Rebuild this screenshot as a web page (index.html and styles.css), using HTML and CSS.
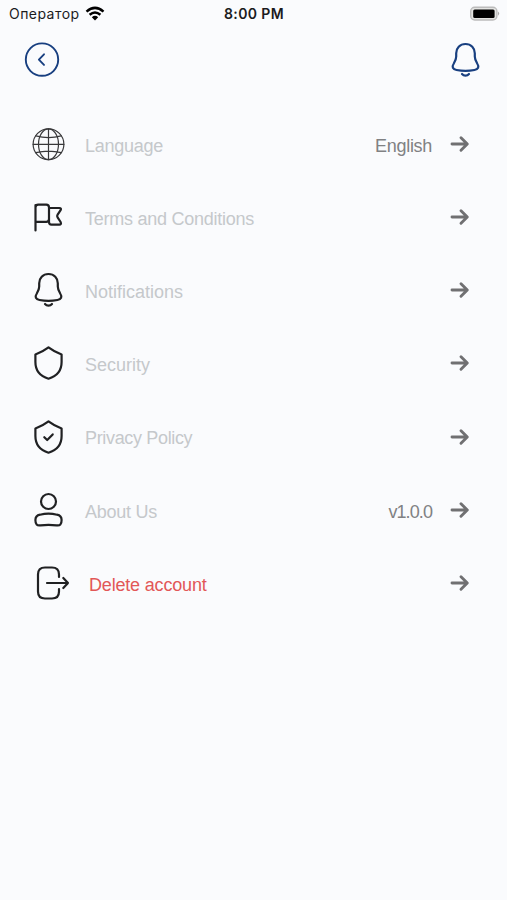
FILE: index.html
```html
<!DOCTYPE html>
<html lang="en">
<head>
<meta charset="utf-8">
<title>Settings</title>
<link rel="stylesheet" href="styles.css">
</head>
<body>
<svg class="defs" aria-hidden="true">
  <symbol id="arrow" viewBox="0 0 20 20"><path d="M2 10H17M11 3.8L17.3 10L11 16.2"/></symbol>
  <symbol id="bell" viewBox="0 0 40 40"><path d="M20.5 4C14.8 4 11.2 8 11.2 13.2V16.5C11.2 19.5 10.2 21.2 8.8 23.5C6.500 27 7.800 29.300 11.500 30C17 31 24 31 29.500 30C33.200 29.300 34.500 27 32.200 23.500C30.800 21.200 29.800 19.500 29.800 16.500V13.200C29.800 8 26.200 4 20.500 4Z"/><path d="M17 34C18.800 36.100 22.200 36.100 24 34"/></symbol>
  <symbol id="shield" viewBox="0 0 40 40"><path d="M20.500 4.300C24.500 7.400 28.500 9.400 33.600 11.500V19C33.600 27.500 28.500 33.300 20.500 35.700C12.500 33.300 7.400 27.500 7.400 19V11.500C12.500 9.400 16.500 7.400 20.500 4.300Z"/></symbol>
</svg>
<header class="status">
  <div class="carrier"><span class="operator">Оператор</span>
    <svg class="wifi" viewBox="0 0 20 16"><path d="M1.500 5.600Q10 -1.800 18.500 5.600M4.600 8.800Q10 4.200 15.400 8.800"/><path class="solid" d="M6.800 11.200Q10 8.500 13.200 11.200L10 14.500Z"/></svg>
  </div>
  <time>8:00 PM</time>
  <svg class="battery" viewBox="0 0 30 16"><rect class="case" x=".7" y="1.200" width="26.200" height="12.800" rx="4"/><rect class="charge" x="3.200" y="3.400" width="21.400" height="8.600" rx="1.500"/><path class="tip" d="M28 5.500Q30.300 7.600 28 9.700Z"/></svg>
</header>
<nav class="toolbar">
  <svg class="back" viewBox="0 0 36 36"><circle cx="18" cy="17.600" r="16.200"/><path d="M20 12.300L14.900 17.600L20 22.900"/></svg>
  <svg class="icon blue"><use href="#bell"/></svg>
</nav>
<main class="menu">
  <a class="row"><svg class="icon globe" viewBox="0 0 40 40"><circle cx="20.500" cy="20.300" r="15.400"/><path d="M20.500 5V35.600M5.100 20.300H35.900M7.800 11.900Q20.500 15.200 33.200 11.900M7.800 28.700Q20.500 25.400 33.200 28.700"/><ellipse cx="20.500" cy="20.300" rx="10" ry="15.400"/></svg><span class="label language">Language</span><span class="value english">English</span><svg class="arrow"><use href="#arrow"/></svg></a>
  <a class="row"><svg class="icon flag" viewBox="0 0 40 40"><path d="M7.500 8V33.500M7.500 24.800H18.300Q21 24.800 21 22V10.500Q21 7.700 18.300 7.700H10.300Q7.500 7.700 7.500 10.500M21 11H31.200Q33.800 11 32.600 13.200L29.600 17.700Q28.700 19 29.600 20.400L32.600 25Q33.800 27.600 31.200 27.600H23.500Q21 27.600 21 25V20"/></svg><span class="label terms">Terms and Conditions</span><svg class="arrow"><use href="#arrow"/></svg></a>
  <a class="row"><svg class="icon"><use href="#bell"/></svg><span class="label notifications">Notifications</span><svg class="arrow"><use href="#arrow"/></svg></a>
  <a class="row"><svg class="icon"><use href="#shield"/></svg><span class="label security">Security</span><svg class="arrow"><use href="#arrow"/></svg></a>
  <a class="row"><svg class="icon" viewBox="0 0 40 40"><use href="#shield" width="40" height="40"/><path d="M16.300 20.200L19.200 23L24.700 17.400"/></svg><span class="label privacy">Privacy Policy</span><svg class="arrow"><use href="#arrow"/></svg></a>
  <a class="row"><svg class="icon" viewBox="0 0 40 40"><circle cx="20.500" cy="11.500" r="7.500"/><path d="M12 24.700Q20.500 22.700 29 24.700C32.500 25.400 33.600 27 33.600 30C33.600 34.500 32 35.900 28.500 35.300Q20.500 34.400 12.500 35.300C9 35.900 7.400 34.500 7.400 30C7.400 27 8.500 25.400 12 24.700Z"/></svg><span class="label about">About Us</span><span class="value version">v1.0.0</span><svg class="arrow"><use href="#arrow"/></svg></a>
  <a class="row"><svg class="icon exit" viewBox="0 0 44 40"><path d="M31 14V11.500Q31 4.500 24 4.500H17Q10 4.500 10 11.500V28.500Q10 35.500 17 35.500H24Q31 35.500 31 28.500V26M19 20H40M35.300 15L40 20L35.300 25"/></svg><span class="label delete">Delete account</span><svg class="arrow"><use href="#arrow"/></svg></a>
</main>
</body>
</html>
```
FILE: styles.css
```css
body {
  margin: 0;
  width: 507px;
  height: 900px;
  background: #fafbfd;
  font-family: "Liberation Sans", Arial, sans-serif;
  overflow: hidden;
}
svg {
  display: block;
  flex: none;
  fill: none;
  stroke-linecap: round;
  stroke-linejoin: round;
}
.defs { display: none; }
.status {
  display: grid;
  grid-template-columns: 1fr auto 1fr;
  align-items: center;
  height: 27px;
  padding: 0 7px 0 9px;
  font: 14px/27px Inter, sans-serif;
  color: #1b1b1d;
}
.carrier { display: flex; align-items: center; gap: 5px; }
.operator { letter-spacing: .45px; }
.wifi { width: 20px; height: 16px; stroke: #000; stroke-width: 2.500; stroke-linecap: butt; }
.wifi .solid { fill: #000; stroke: none; }
time { font-weight: 600; letter-spacing: .4px; margin-right: 1px; }
.battery { width: 30px; height: 16px; justify-self: end; }
.case { stroke: #bcbcbc; stroke-width: 1.400; fill: #e4e4e2; }
.charge { fill: #000; }
.tip { fill: #aaa; }
.toolbar {
  display: flex;
  align-items: center;
  justify-content: space-between;
  height: 65px;
  padding: 0 22px 0 24px;
}
.back { width: 36px; height: 36px; stroke: #183f80; stroke-width: 1.900; }
.icon { width: 40px; height: 40px; stroke: #202123; stroke-width: 2.200; }
.blue { stroke: #183f80; }
.globe { stroke-width: 1.200; stroke: #38383a; }
.menu { padding-top: 15.300px; }
.row {
  display: flex;
  align-items: center;
  height: 73.200px;
  padding: 0 37px 0 28px;
}
.label {
  flex: 1;
  margin-left: 17px;
  padding-top: 3.600px;
  font-size: 18px;
  line-height: 24px;
  color: #c5c8cb;
  white-space: nowrap;
}
.value { padding-top: 3.600px; font-size: 18px; line-height: 24px; color: #808183; }
.language, .terms, .about { letter-spacing: -.25px; }
.privacy { letter-spacing: -.340px; }
.english { letter-spacing: -.3px; }
.version { letter-spacing: -.900px; margin-right: .900px; }
.arrow { width: 20px; height: 20px; margin-left: 18px; stroke: #707072; stroke-width: 2.900; }
.version + .arrow { margin-left: 17.100px; }
.exit { width: 44px; }
.label.delete { color: #e25757; letter-spacing: -.180px; }
```
